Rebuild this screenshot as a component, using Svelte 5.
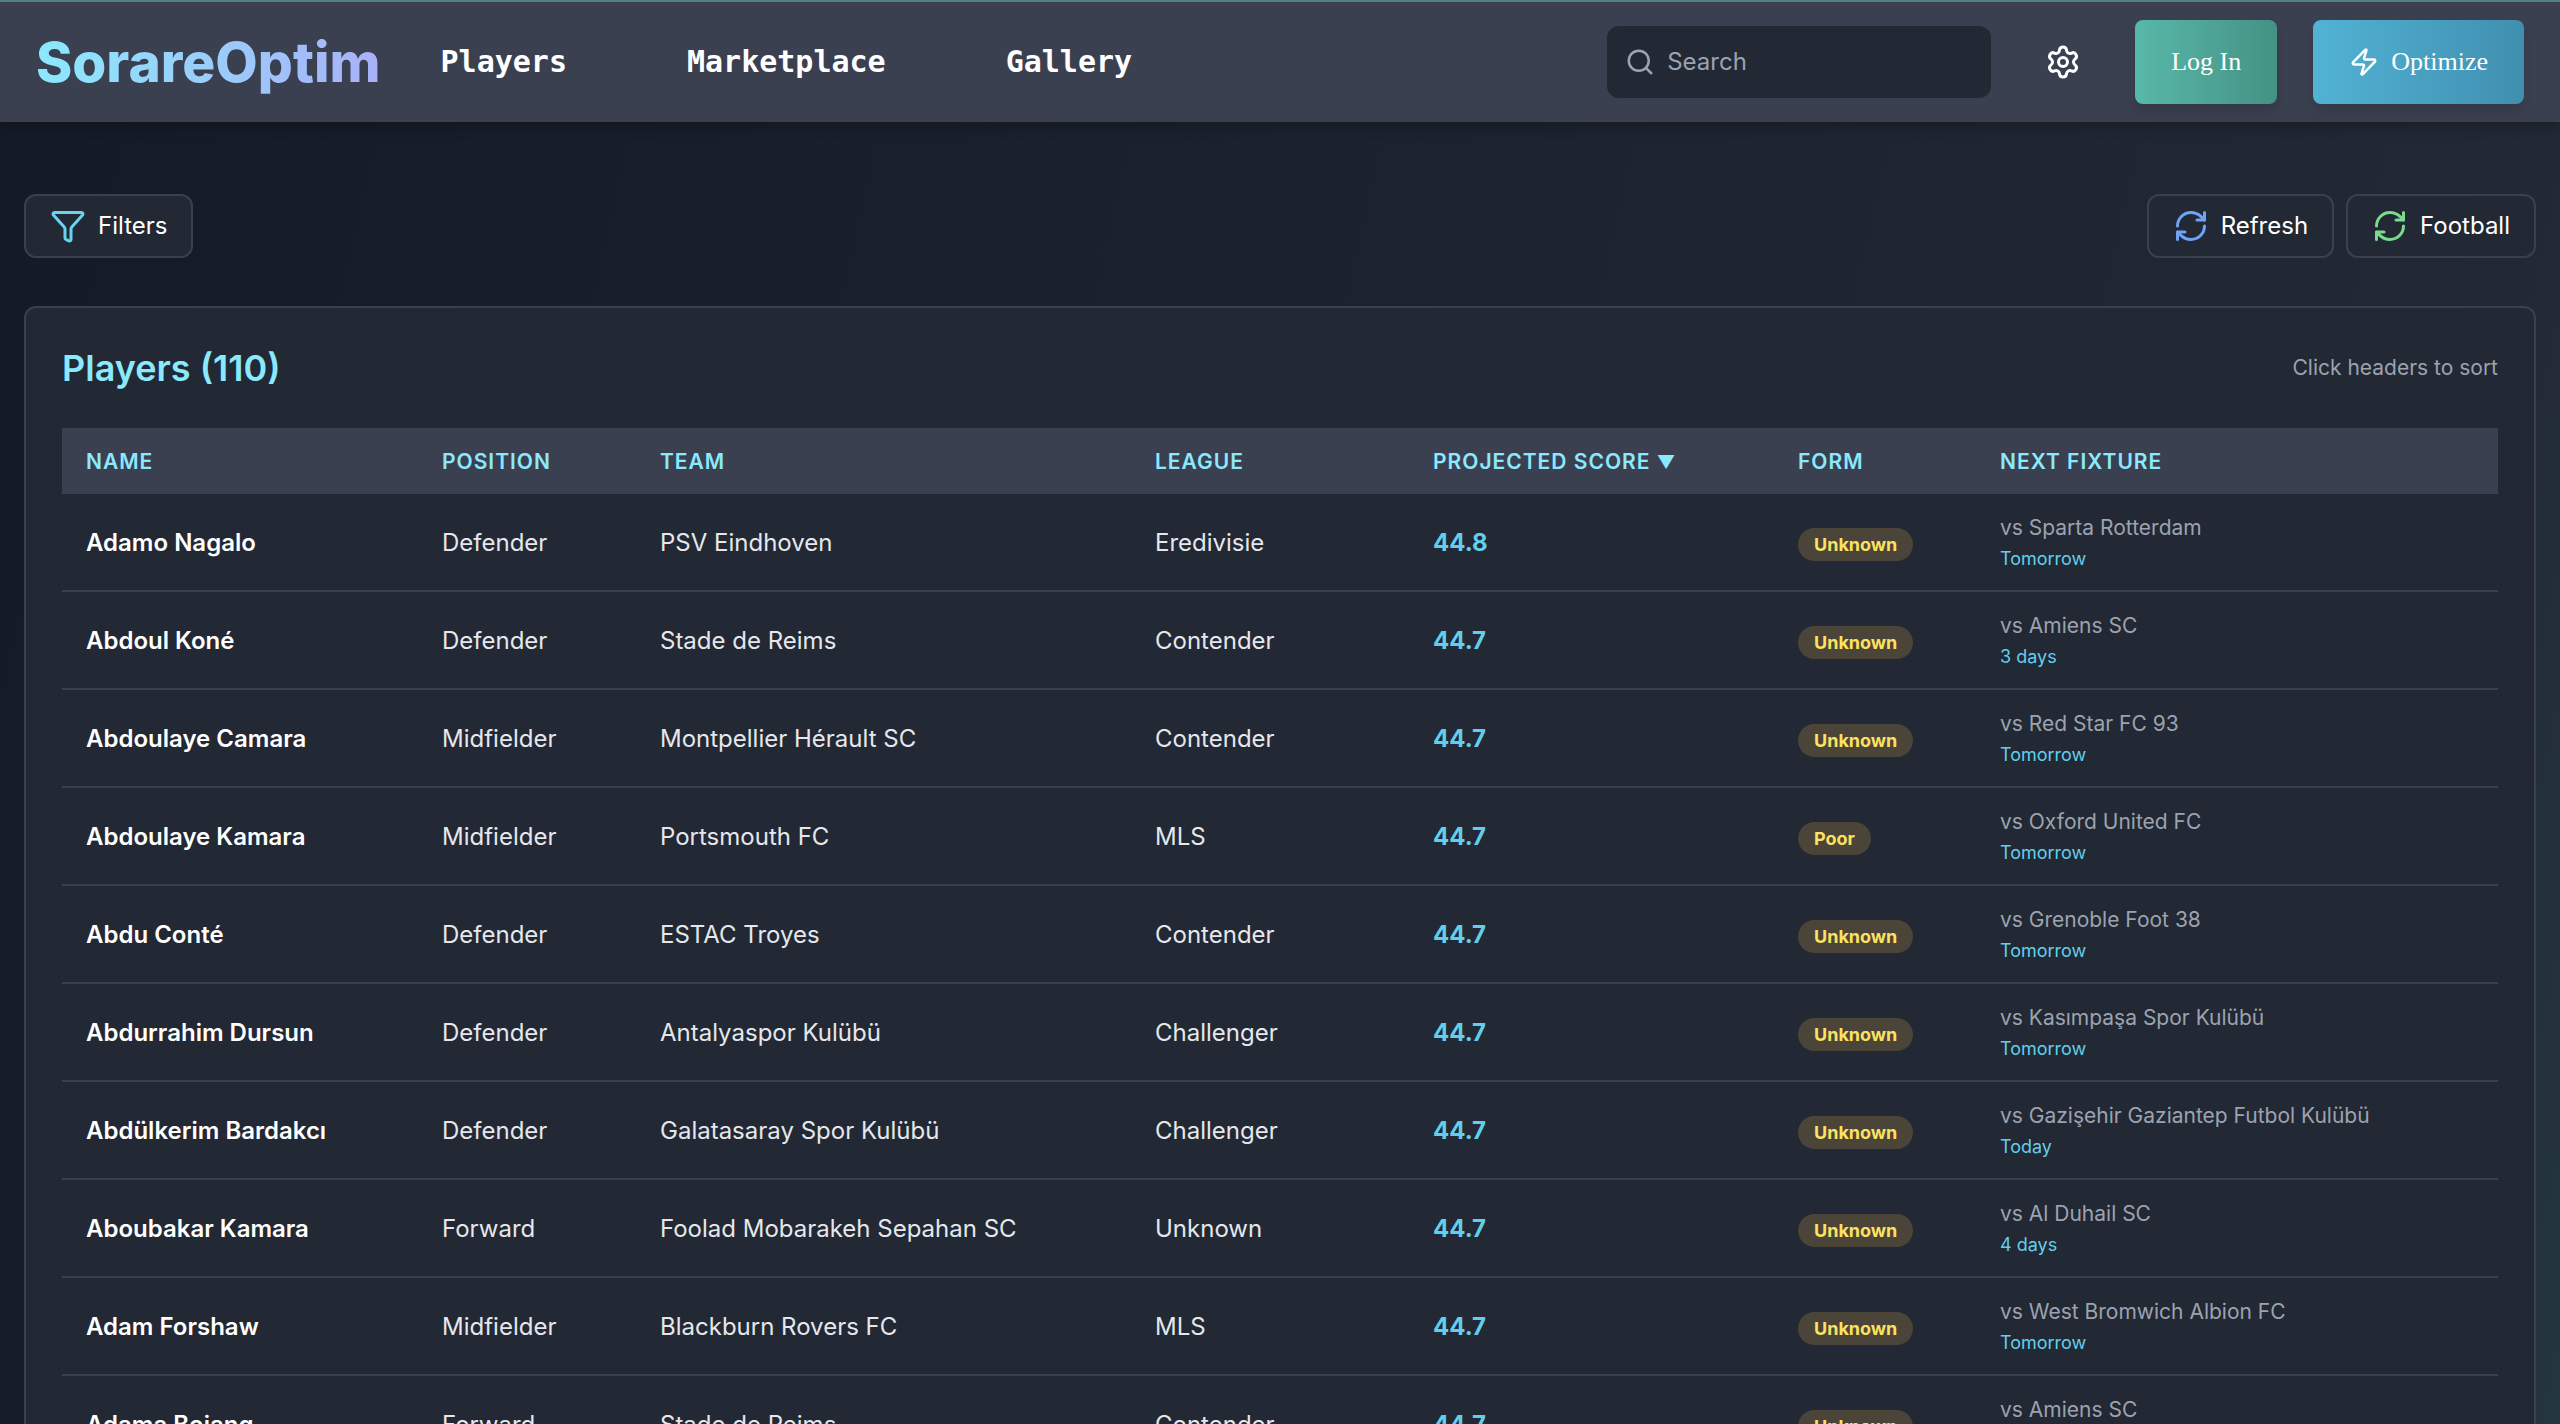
<script lang="ts">
  type Player = {
    name: string;
    position: string;
    team: string;
    league: string;
    score: string;
    form: string;
    opponent: string;
    when: string;
  };

  const total = 110;

  const links = ['Players', 'Marketplace', 'Gallery'];

  const columns = [
    { key: 'name', label: 'Name' },
    { key: 'position', label: 'Position' },
    { key: 'team', label: 'Team' },
    { key: 'league', label: 'League' },
    { key: 'score', label: 'Projected Score' },
    { key: 'form', label: 'Form' },
    { key: 'opponent', label: 'Next Fixture' },
  ] as const;

  type Key = (typeof columns)[number]['key'];

  const rows: Player[] = [
    ['Adamo Nagalo', 'Defender', 'PSV Eindhoven', 'Eredivisie', '44.8', 'Unknown', 'Sparta Rotterdam', 'Tomorrow'],
    ['Abdoul Koné', 'Defender', 'Stade de Reims', 'Contender', '44.7', 'Unknown', 'Amiens SC', '3 days'],
    ['Abdoulaye Camara', 'Midfielder', 'Montpellier Hérault SC', 'Contender', '44.7', 'Unknown', 'Red Star FC 93', 'Tomorrow'],
    ['Abdoulaye Kamara', 'Midfielder', 'Portsmouth FC', 'MLS', '44.7', 'Poor', 'Oxford United FC', 'Tomorrow'],
    ['Abdu Conté', 'Defender', 'ESTAC Troyes', 'Contender', '44.7', 'Unknown', 'Grenoble Foot 38', 'Tomorrow'],
    ['Abdurrahim Dursun', 'Defender', 'Antalyaspor Kulübü', 'Challenger', '44.7', 'Unknown', 'Kasımpaşa Spor Kulübü', 'Tomorrow'],
    ['Abdülkerim Bardakcı', 'Defender', 'Galatasaray Spor Kulübü', 'Challenger', '44.7', 'Unknown', 'Gazişehir Gaziantep Futbol Kulübü', 'Today'],
    ['Aboubakar Kamara', 'Forward', 'Foolad Mobarakeh Sepahan SC', 'Unknown', '44.7', 'Unknown', 'Al Duhail SC', '4 days'],
    ['Adam Forshaw', 'Midfielder', 'Blackburn Rovers FC', 'MLS', '44.7', 'Unknown', 'West Bromwich Albion FC', 'Tomorrow'],
    ['Adama Bojang', 'Forward', 'Stade de Reims', 'Contender', '44.7', 'Unknown', 'Amiens SC', '3 days'],
  ].map(([name, position, team, league, score, form, opponent, when]) => ({
    name, position, team, league, score, form, opponent, when,
  }));

  let sortKey = $state<Key>('score');
  let descending = $state(true);
  let search = $state('');

  const visible = $derived(
    rows
      .filter((p) => p.name.toLowerCase().includes(search.toLowerCase()))
      .sort((a, b) => {
        const order = a[sortKey].localeCompare(b[sortKey], undefined, { numeric: true });
        return descending ? -order : order;
      }),
  );

  function sortBy(key: Key) {
    if (sortKey === key) {
      descending = !descending;
    } else {
      sortKey = key;
      descending = key === 'score';
    }
  }
</script>

{#snippet refreshIcon()}
  <svg class="icon" viewBox="0 0 24 24" aria-hidden="true">
    <path d="M3 12a9 9 0 0 1 9-9 9.75 9.75 0 0 1 6.74 2.74L21 8" />
    <path d="M21 3v5h-5" />
    <path d="M21 12a9 9 0 0 1-9 9 9.75 9.75 0 0 1-6.74-2.74L3 16" />
    <path d="M8 16H3v5" />
  </svg>
{/snippet}

<div class="page">
  <header>
    <a class="logo" href="#home">SorareOptim</a>
    <nav>
      {#each links as link}
        <a href="#{link.toLowerCase()}">{link}</a>
      {/each}
    </nav>
    <label class="search">
      <svg viewBox="0 0 24 24" aria-hidden="true">
        <circle cx="11" cy="11" r="8" />
        <path d="m21 21-4.3-4.3" />
      </svg>
      <input type="text" placeholder="Search" aria-label="Search" bind:value={search} />
    </label>
    <button class="settings" aria-label="Settings">
      <svg viewBox="0 0 24 24" aria-hidden="true">
        <path d="M9.671 4.136a2.34 2.34 0 0 1 4.659 0 2.34 2.34 0 0 0 3.319 1.915 2.34 2.34 0 0 1 2.33 4.033 2.34 2.34 0 0 0 0 3.831 2.34 2.34 0 0 1-2.33 4.033 2.34 2.34 0 0 0-3.319 1.915 2.34 2.34 0 0 1-4.659 0 2.34 2.34 0 0 0-3.32-1.915 2.34 2.34 0 0 1-2.33-4.033 2.34 2.34 0 0 0 0-3.831A2.34 2.34 0 0 1 6.35 6.051a2.34 2.34 0 0 0 3.319-1.915" />
        <circle cx="12" cy="12" r="3" />
      </svg>
    </button>
    <button class="cta login">Log In</button>
    <button class="cta optimize">
      <svg viewBox="0 0 24 24" aria-hidden="true">
        <path d="M4 14a1 1 0 0 1-.78-1.63l9.9-10.2a.5.5 0 0 1 .86.46l-1.92 6.02A1 1 0 0 0 13 10h7a1 1 0 0 1 .78 1.63l-9.9 10.2a.5.5 0 0 1-.86-.46l1.92-6.02A1 1 0 0 0 11 14z" />
      </svg>
      Optimize
    </button>
  </header>

  <main>
    <div class="toolbar">
      <button class="tool filters">
        <svg class="icon" viewBox="0 0 24 24" aria-hidden="true">
          <path d="M10 20a1 1 0 0 0 .553.895l2 1A1 1 0 0 0 14 21v-7a2 2 0 0 1 .517-1.341L21.74 4.67A1 1 0 0 0 21 3H3a1 1 0 0 0-.742 1.67l7.225 7.989A2 2 0 0 1 10 14z" />
        </svg>
        Filters
      </button>
      <div class="group">
        <button class="tool refresh">{@render refreshIcon()}Refresh</button>
        <button class="tool sport">{@render refreshIcon()}Football</button>
      </div>
    </div>

    <section>
      <div class="heading">
        <h2>Players ({total})</h2>
        <span>Click headers to sort</span>
      </div>
      <table>
        <colgroup>
          {#each columns as column}
            <col class={column.key} />
          {/each}
        </colgroup>
        <thead>
          <tr>
            {#each columns as column}
              <th scope="col">
                <button onclick={() => sortBy(column.key)}>
                  {column.label}
                  {#if sortKey === column.key}
                    <span class="arrow">{descending ? '▼' : '▲'}</span>
                  {/if}
                </button>
              </th>
            {/each}
          </tr>
        </thead>
        <tbody>
          {#each visible as player}
            <tr>
              <td class="player">{player.name}</td>
              <td>{player.position}</td>
              <td>{player.team}</td>
              <td>{player.league}</td>
              <td class="points">{player.score}</td>
              <td><span class="badge">{player.form}</span></td>
              <td class="fixture">
                <div>vs {player.opponent}</div>
                <div class="when">{player.when}</div>
              </td>
            </tr>
          {/each}
        </tbody>
      </table>
    </section>
  </main>
</div>

<style>
  :global(body) {
    background: #141a27;
  }

  .page {
    height: 100vh;
    overflow: hidden;
    background: linear-gradient(to bottom right, #141a27, #222834 50%, #319795) 0 0 / 100% 11500px;
    color: #fff;
    font-family: Inter, 'Noto Sans', sans-serif;
    font-size: 24px;
    line-height: 36px;
  }

  button {
    border: 0;
    padding: 0;
    background: none;
    color: inherit;
    font: inherit;
    cursor: pointer;
  }

  svg {
    fill: none;
    stroke: currentColor;
    stroke-width: 2;
    stroke-linecap: round;
    stroke-linejoin: round;
  }

  header {
    display: flex;
    align-items: center;
    height: 120px;
    padding: 0 36px;
    border-top: 2px solid #4f8088;
    background: #3b4050;
    box-shadow: 0 4px 12px rgba(0, 0, 0, 0.25);
  }

  .logo {
    background: linear-gradient(to right, #8be9fd, #a9b1f8);
    background-clip: text;
    color: transparent;
    font-size: 55px;
    font-weight: 800;
    line-height: 72px;
    text-decoration: none;
  }

  nav {
    display: flex;
    gap: 120px;
    margin-left: 60px;
  }

  nav a {
    color: #fff;
    font-family: 'DejaVu Sans Mono', monospace;
    font-size: 30px;
    font-weight: 700;
    text-decoration: none;
  }

  .search {
    display: flex;
    align-items: center;
    gap: 12px;
    box-sizing: border-box;
    width: 384px;
    height: 72px;
    margin-left: auto;
    padding: 0 18px;
    border-radius: 12px;
    background: #222834;
    color: #9ca3af;
  }

  .search svg {
    flex: none;
    width: 30px;
    height: 30px;
  }

  .search input {
    flex: 1;
    min-width: 0;
    border: 0;
    padding: 0;
    outline: none;
    background: none;
    color: #fff;
    font: inherit;
  }

  .search input::placeholder {
    color: #9ca3af;
    opacity: 1;
  }

  .settings {
    display: flex;
    margin: 0 54px;
  }

  .settings svg {
    width: 36px;
    height: 36px;
  }

  .cta {
    display: flex;
    align-items: center;
    gap: 12px;
    height: 84px;
    padding: 0 36px;
    border-radius: 8px;
    box-shadow: 0 8px 12px rgba(0, 0, 0, 0.12);
    font-family: 'Liberation Serif', serif;
    font-size: 26px;
  }

  .cta svg {
    width: 30px;
    height: 30px;
  }

  .login {
    margin-right: 36px;
    background: linear-gradient(to right, #58b8a8, #449284);
  }

  .optimize {
    background: linear-gradient(to right, #52b3d4, #408fb0);
  }

  main {
    padding: 72px 24px 0;
  }

  .toolbar,
  .group,
  .tool,
  .heading {
    display: flex;
    align-items: center;
  }

  .toolbar,
  .heading {
    justify-content: space-between;
  }

  .group {
    gap: 12px;
  }

  .tool {
    gap: 12px;
    padding: 12px 24px;
    border: 2px solid #3b4050;
    border-radius: 12px;
    background: #222834;
  }

  .icon {
    width: 36px;
    height: 36px;
  }

  .filters .icon {
    color: #67d4ee;
  }

  .refresh .icon {
    color: #6fa3f7;
  }

  .sport .icon {
    color: #78dc8c;
  }

  section {
    margin-top: 48px;
    padding: 36px;
    border: 2px solid #3b4050;
    border-radius: 12px;
    background: #222834;
  }

  .heading {
    margin-bottom: 36px;
  }

  h2 {
    margin: 0;
    color: #8be9fd;
    font-size: 36px;
    font-weight: 600;
    line-height: 48px;
  }

  .heading span {
    color: #9ca3af;
    font-size: 21px;
  }

  table {
    width: 100%;
    border-collapse: collapse;
    table-layout: fixed;
  }

  col.name {
    width: 356px;
  }

  col.position {
    width: 218px;
  }

  col.team {
    width: 495px;
  }

  col.league {
    width: 278px;
  }

  col.score {
    width: 365px;
  }

  col.form {
    width: 202px;
  }

  th {
    padding: 19px 24px 17px;
    background: #3b4050;
    text-align: left;
  }

  th button {
    display: block;
    color: #8be9fd;
    font-size: 21px;
    font-weight: 600;
    letter-spacing: 1px;
    line-height: 30px;
    text-transform: uppercase;
    white-space: nowrap;
  }

  .arrow {
    font-size: 18px;
    line-height: 18px;
  }

  td {
    padding: 18px 24px 16px;
    border-bottom: 2px solid #3b4050;
    color: #e5e7eb;
    white-space: nowrap;
  }

  .player {
    color: #fff;
    font-weight: 600;
  }

  .points {
    color: #62cfea;
    font-weight: 700;
  }

  .badge {
    display: inline-block;
    padding: 4px 16px;
    border-radius: 18px;
    background: #4a4538;
    color: #fde160;
    font-size: 18px;
    font-weight: 700;
    line-height: 25px;
    vertical-align: middle;
  }

  .fixture {
    color: #9ca3af;
    font-size: 21px;
    line-height: 31px;
  }

  .when {
    color: #62cfea;
    font-size: 18px;
  }
</style>
